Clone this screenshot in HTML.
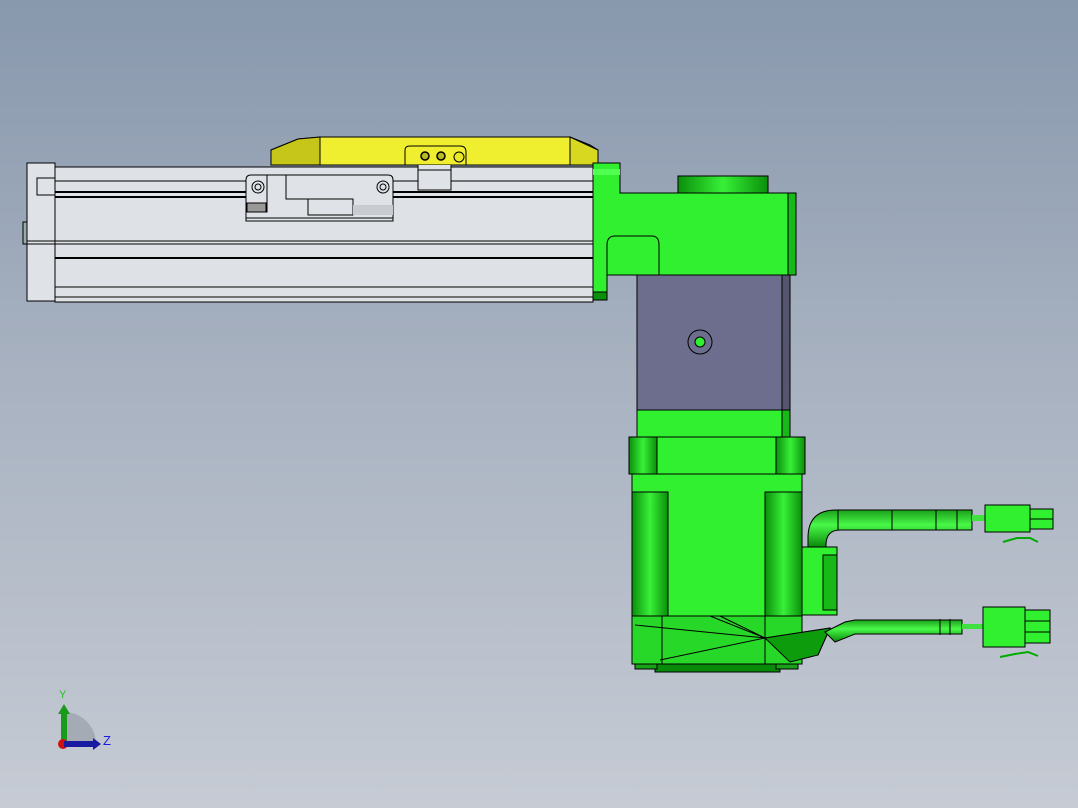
<!DOCTYPE html>
<html><head><meta charset="utf-8"><style>
html,body{margin:0;padding:0}
body{width:1078px;height:808px;overflow:hidden;background:linear-gradient(#8898ad 0%,#a7b1c0 45%,#c6cbd4 100%);font-family:"Liberation Sans",sans-serif}
svg{position:absolute;left:0;top:0}
</style></head><body>
<svg width="1078" height="808" viewBox="0 0 1078 808">
<defs>
<linearGradient id="gv" x1="0" x2="1"><stop offset="0" stop-color="#0a8f0a"/><stop offset=".5" stop-color="#38f038"/><stop offset="1" stop-color="#0a8f0a"/></linearGradient>
<linearGradient id="gh" x1="0" y1="0" x2="0" y2="1"><stop offset="0" stop-color="#1aa01a"/><stop offset=".4" stop-color="#48f848"/><stop offset="1" stop-color="#0a8a0a"/></linearGradient>
</defs>
<g stroke="#000" stroke-width="1" fill="none">
<!-- yellow carriage top -->
<path d="M271 165 L271 150 L298 139 L320 137 L570 137 L590 145 L598 150 L598 165 Z" fill="#efef30"/>
<path d="M271 150 L298 139 L320 137 L320 165 L271 165Z" fill="#c6c61a"/>
<path d="M570 137 L598 150 L598 165 L570 165Z" fill="#d8d820"/>
<path d="M405 165 L405 150 Q405 146 410 146 L460 146 Q466 146 466 152 L466 165" />
<circle cx="425" cy="156" r="4" fill="#b8b820" stroke-width="1.5"/>
<circle cx="441" cy="156" r="4" fill="#b8b820" stroke-width="1.5"/>
<circle cx="459" cy="157" r="5" fill="#e8e828"/>
<!-- rail -->
<rect x="27" y="163" width="28" height="138" fill="#dfe3e8"/>
<rect x="37" y="178" width="18" height="17" fill="#dfe3e8"/>
<rect x="23" y="222" width="4" height="22" fill="#9aa"/>
<rect x="55" y="167" width="538" height="135" fill="#dee2e6"/>
<line x1="55" y1="181" x2="593" y2="181"/>
<line x1="55" y1="192" x2="593" y2="192" stroke-width="2"/>
<line x1="55" y1="197" x2="593" y2="197" stroke-width="2"/>
<line x1="27" y1="241" x2="593" y2="241"/>
<line x1="27" y1="244" x2="593" y2="244"/>
<line x1="55" y1="258" x2="593" y2="258" stroke-width="2"/>
<line x1="55" y1="287" x2="593" y2="287"/>
<line x1="55" y1="297" x2="593" y2="297"/>
<!-- carriage slider -->
<path d="M418 165 L418 190 L451 190 L451 165" fill="#dfe3e8"/>
<line x1="418" y1="170" x2="451" y2="170"/>
<path d="M246 180 Q246 175 251 175 L388 175 Q393 175 393 180 L393 221 L246 221 Z" fill="#dfe3e8"/>
<path d="M267 175 L267 212 L246 212 M286 175 L286 199 L308 199 L308 215 L353 215 L353 199 L286 199" />
<rect x="247" y="203" width="19" height="9" fill="#999"/>
<rect x="353" y="205" width="40" height="10" fill="#c8ccd0" stroke="none"/>
<circle cx="258" cy="187" r="6"/><circle cx="258" cy="187" r="3"/>
<circle cx="383" cy="187" r="6"/><circle cx="383" cy="187" r="3"/>
<line x1="246" y1="218" x2="393" y2="218"/>
<!-- green bracket -->
<path d="M593 163 L620 163 L620 193 L796 193 L796 275 L607 275 L607 300 L593 300 Z" fill="#30f030"/>
<rect x="593" y="169" width="27" height="6" fill="#50ff50" stroke="none"/>
<rect x="593" y="292" width="14" height="8" fill="#0a900a"/>
<rect x="788" y="193" width="8" height="82" fill="#18b818"/>
<path d="M607 275 L607 245 Q607 236 615 236 L652 236 Q659 236 659 245 L659 275"/>
<rect x="678" y="176" width="90" height="17" fill="url(#gv)"/>
<!-- grey motor -->
<rect x="637" y="275" width="153" height="135" fill="#6d6e8e"/>
<rect x="782" y="275" width="8" height="135" fill="#55556e"/>
<circle cx="700" cy="342" r="12"/>
<circle cx="700" cy="342" r="5" fill="#30f030"/>
<rect x="637" y="410" width="153" height="27" fill="#30f030"/>
<rect x="782" y="410" width="8" height="27" fill="#18b818"/>
<!-- flange -->
<rect x="629" y="437" width="176" height="37" fill="#30f030"/>
<rect x="629" y="437" width="28" height="37" fill="url(#gv)"/>
<rect x="776" y="437" width="29" height="37" fill="url(#gv)"/>
<!-- body -->
<rect x="632" y="474" width="170" height="142" fill="#30f030"/>
<rect x="632" y="492" width="36" height="124" fill="url(#gv)"/>
<rect x="765" y="492" width="37" height="124" fill="url(#gv)"/>
<rect x="632" y="616" width="170" height="48" fill="#28d828"/>
<path d="M632 616 L802 616 M662 616 L662 664 M765 616 L765 664 M710 616 L765 638 L660 660 M765 638 L635 625 M765 638 L720 616 M765 638 L830 628 L818 655 Z" />
<path d="M765 638 L830 628 L818 655 L790 662 Z" fill="#0c9c0c"/>
<rect x="655" y="664" width="125" height="8" fill="#0a8a0a"/>
<rect x="635" y="664" width="22" height="5" fill="#18a018"/>
<rect x="776" y="664" width="22" height="5" fill="#18a018"/>
<!-- connector box -->
<rect x="802" y="547" width="35" height="68" fill="#30f030"/>
<rect x="823" y="555" width="14" height="55" fill="#18b818"/>
<!-- upper cable -->
<path d="M808 547 L808 538 Q808 510 836 510 L972 510 L972 530 L840 530 Q826 530 826 545 L826 547 Z" fill="url(#gh)"/>
<line x1="838" y1="510" x2="838" y2="530"/><line x1="892" y1="510" x2="892" y2="530"/><line x1="936" y1="510" x2="936" y2="530"/><line x1="957" y1="510" x2="957" y2="530"/>
<rect x="972" y="515" width="13" height="6" fill="#40e040" stroke="none"/>
<rect x="985" y="505" width="45" height="27" fill="#30f030"/>
<rect x="1030" y="509" width="23" height="10" fill="#30f030"/><rect x="1030" y="519" width="23" height="10" fill="#30f030"/>
<path d="M1003 542 L1017 538 L1030 538 L1038 542" stroke="#0a0" stroke-width="2"/>
<!-- lower cable -->
<path d="M825 632 L845 622 L855 620 L962 620 L962 634 L855 634 L835 642 Z" fill="url(#gh)"/>
<line x1="940" y1="619" x2="940" y2="635"/><line x1="950" y1="619" x2="950" y2="635"/>
<rect x="962" y="624" width="21" height="5" fill="#40e040" stroke="none"/>
<rect x="983" y="607" width="42" height="40" fill="#30f030"/>
<rect x="1025" y="610" width="25" height="11" fill="#30f030"/><rect x="1025" y="621" width="25" height="11" fill="#30f030"/><rect x="1025" y="632" width="25" height="11" fill="#30f030"/>
<path d="M1000 657 L1015 654 L1028 652 L1038 656" stroke="#0a0" stroke-width="2"/>
</g>
<!-- triad -->
<path d="M64 744 L64 712 A32 32 0 0 1 96 744 Z" fill="#9ea4ae" opacity=".8"/>
<rect x="61" y="712" width="6" height="32" fill="#1a9a1a"/>
<path d="M58 714 L64 704 L70 714Z" fill="#1a9a1a"/>
<circle cx="63" cy="744" r="5" fill="#d01010"/>
<rect x="64" y="741" width="30" height="6" fill="#1a1aa0"/>
<path d="M93 738 L101 744 L93 750Z" fill="#1a1aa0"/>
<text x="59" y="698" font-size="11" fill="#20c020">Y</text>
<text x="103" y="745" font-size="13" fill="#1a1ae0">Z</text>
</svg>
</body></html>
